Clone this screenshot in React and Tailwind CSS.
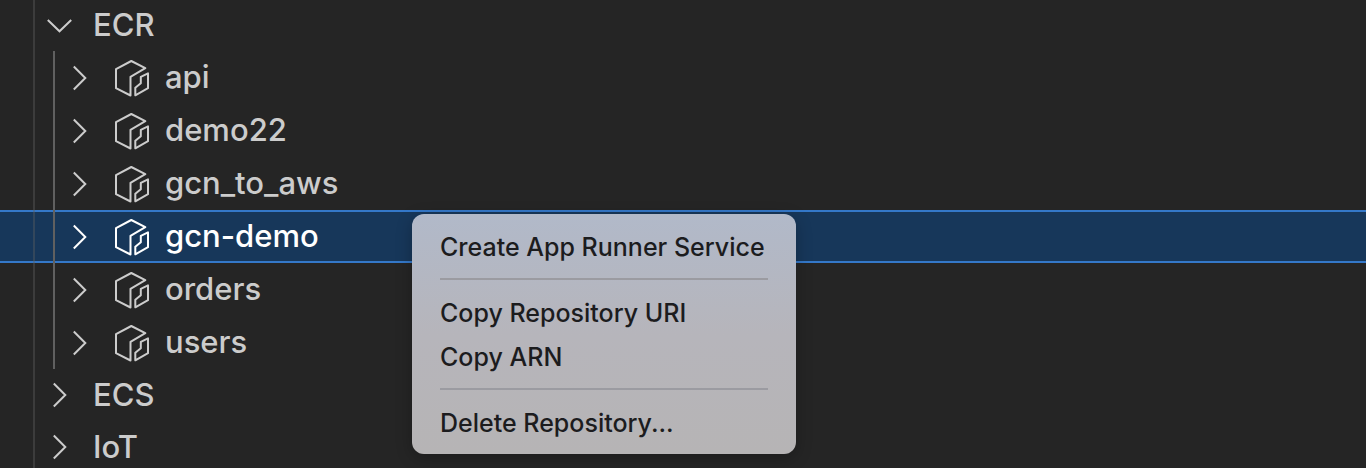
const repositories = ['api', 'demo22', 'gcn_to_aws', 'gcn-demo', 'orders', 'users'];
const selected = 'gcn-demo';

function Chevron({ open = false }) {
  return (
    <svg viewBox="0 0 32 32" className="size-8 shrink-0" fill="none" stroke="currentColor" strokeWidth="2" aria-hidden="true">
      {open ? <path d="M4.8 11 16.5 22.3 28.2 11" /> : <path d="M10.8 4.5 22.3 16 10.8 27.5" />}
    </svg>
  );
}

function RepositoryIcon() {
  return (
    <svg
      viewBox="0 0 40 40"
      className="size-10 shrink-0"
      fill="none"
      stroke="currentColor"
      strokeWidth="2"
      strokeLinejoin="round"
      aria-hidden="true"
    >
      <path d="M19.3 3 33.3 10.2 18.5 18.8V37.5L4 30.2V11.2Z" />
      <path d="M36 15.4V30.2L23.3 37.3V29.8L28.8 25.2V18.8Z" />
    </svg>
  );
}

function ServiceRow({ name, open }) {
  return (
    <button
      type="button"
      role="treeitem"
      aria-expanded={!!open}
      className="flex h-[52px] w-full items-center gap-[18px] pl-[43px] text-left"
    >
      <Chevron open={open} />
      <span>{name}</span>
    </button>
  );
}

function RepositoryRow({ name }) {
  const active = name === selected;
  return (
    <button
      type="button"
      role="treeitem"
      aria-expanded={false}
      aria-selected={active}
      className={`flex h-[53px] w-full items-center border-y-2 pb-0.5 pl-[63px] text-left ${
        active ? 'border-[#3478c9] bg-[#17375a] text-white' : 'border-transparent'
      }`}
    >
      <span className="flex items-center pt-0.5">
        <Chevron />
        <span className="ml-[17px] flex">
          <RepositoryIcon />
        </span>
      </span>
      <span className="ml-[13px]">{name}</span>
    </button>
  );
}

function MenuItem({ children }) {
  return (
    <button type="button" role="menuitem" className="flex h-11 w-full items-center px-7 text-left">
      {children}
    </button>
  );
}

function Separator() {
  return <hr className="mx-7 mt-[9px] mb-[11px] border-t-2 border-[#9b9ba1]" />;
}

export default function App() {
  return (
    <main className="relative h-screen overflow-hidden bg-[#252525] font-['Inter','Liberation_Sans',sans-serif] text-[#cccccc]">
      <div role="tree" aria-label="AWS resources" className="-mt-px text-[31px] leading-10 font-[450]">
        <ServiceRow name="ECR" open />
        <div role="group" className="relative">
          {repositories.map((name) => (
            <RepositoryRow key={name} name={name} />
          ))}
          <span className="absolute inset-y-0 left-[53px] w-0.5 bg-[#606060]" />
        </div>
        <ServiceRow name="ECS" />
        <ServiceRow name="IoT" />
      </div>
      <span className="absolute inset-y-0 left-[33px] w-0.5 bg-[#606060]/40" />
      <div
        role="menu"
        aria-label="Repository actions"
        className="absolute top-[214px] left-[412px] w-96 rounded-xl bg-linear-to-b from-[#b1b9c9] via-[#b6b5bb] to-[#b6b4b5] pt-[11px] pb-[9px] text-[25px] leading-8 font-[450] text-[#1c1c1e] shadow-[0_4px_16px_rgba(0,0,0,0.25)]"
      >
        <MenuItem>Create App Runner Service</MenuItem>
        <Separator />
        <MenuItem>Copy Repository URI</MenuItem>
        <MenuItem>Copy ARN</MenuItem>
        <Separator />
        <MenuItem>Delete Repository...</MenuItem>
      </div>
    </main>
  );
}
